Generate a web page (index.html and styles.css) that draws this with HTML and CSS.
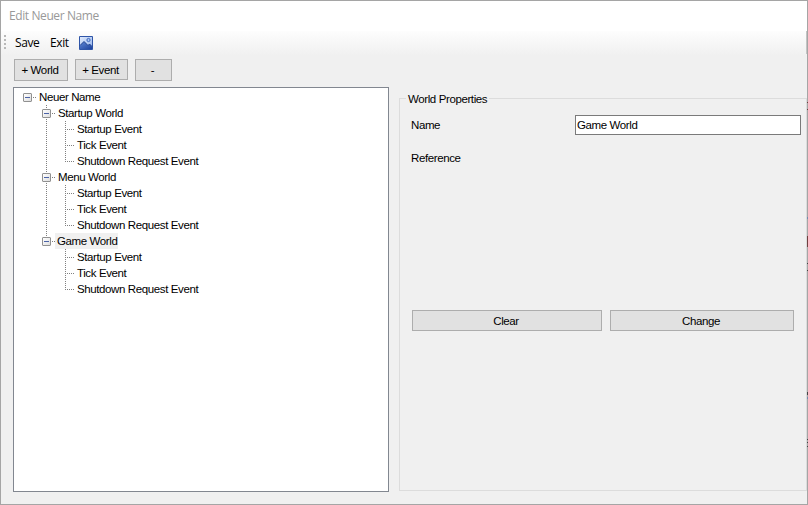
FILE: index.html
```html
<!DOCTYPE html>
<html lang="en">
<head>
<meta charset="utf-8">
<title>Edit Neuer Name</title>
<link rel="stylesheet" href="styles.css">
</head>
<body>
<div class="window">
  <header class="titlebar">Edit Neuer Name</header>
  <nav class="toolbar">
    <i class="grip"></i>
    <span class="save">Save</span>
    <span class="exit">Exit</span>
    <svg class="picture" width="14" height="14" viewBox="0 0 14 14">
      <defs>
        <linearGradient id="sky" x2="1" y2="1"><stop stop-color="#e3ecfc"/><stop offset="1" stop-color="#8fb0ec"/></linearGradient>
        <linearGradient id="hill" x2="1" y2="1"><stop stop-color="#5f87d6"/><stop offset="1" stop-color="#1c429c"/></linearGradient>
      </defs>
      <path d="M.5.5h13v13H.5z" fill="url(#sky)" stroke="#2f55a8"/>
      <path d="M1 9.500L5 5.500l4 4 1.500-1.500L13 10.500V13H1z" fill="url(#hill)"/>
      <path d="M1 9.500L5 5.500l4 4 1.500-1.500L13 10.500" fill="none" stroke="#1d3f8c"/>
      <circle cx="9.500" cy="4" r="1.600" fill="#a9c5f5" stroke="#3f68bd"/>
    </svg>
  </nav>
  <div class="actions">
    <button class="btn world">+ World</button>
    <button class="btn event">+ Event</button>
    <button class="btn minus">-</button>
  </div>
  <main class="content">
    <div class="tree">
      <div class="row"><i class="cell box"></i><span>Neuer Name</span></div>
      <div class="row"><i class="cell"></i><i class="cell line box"></i><span>Startup World</span></div>
      <div class="row"><i class="cell"></i><i class="cell line"></i><i class="cell line leaf"></i><span>Startup Event</span></div>
      <div class="row"><i class="cell"></i><i class="cell line"></i><i class="cell line leaf"></i><span>Tick Event</span></div>
      <div class="row"><i class="cell"></i><i class="cell line"></i><i class="cell end leaf"></i><span>Shutdown Request Event</span></div>
      <div class="row"><i class="cell"></i><i class="cell line box"></i><span>Menu World</span></div>
      <div class="row"><i class="cell"></i><i class="cell line"></i><i class="cell line leaf"></i><span>Startup Event</span></div>
      <div class="row"><i class="cell"></i><i class="cell line"></i><i class="cell line leaf"></i><span>Tick Event</span></div>
      <div class="row"><i class="cell"></i><i class="cell line"></i><i class="cell end leaf"></i><span>Shutdown Request Event</span></div>
      <div class="row"><i class="cell"></i><i class="cell end box"></i><span class="selected">Game World</span></div>
      <div class="row"><i class="cell"></i><i class="cell"></i><i class="cell line leaf"></i><span>Startup Event</span></div>
      <div class="row"><i class="cell"></i><i class="cell"></i><i class="cell line leaf"></i><span>Tick Event</span></div>
      <div class="row"><i class="cell"></i><i class="cell"></i><i class="cell end leaf"></i><span>Shutdown Request Event</span></div>
    </div>
    <fieldset class="group">
      <legend>World Properties</legend>
      <div class="field"><label for="name">Name</label><input id="name" value="Game World"></div>
      <div class="reference">Reference</div>
      <div class="pair">
        <button class="btn clear">Clear</button>
        <button class="btn change">Change</button>
      </div>
    </fieldset>
  </main>
  <svg class="edge" width="2" height="505" viewBox="0 0 2 505">
    <path d="M0 31h1v23H0z" fill="#c4c4c4"/>
    <path d="M1 102h1v1H1zM1 109h1v1H1zM1 236h1v11H1z" fill="#6e4040"/>
    <path d="M1 217h1v2H1zM1 397h1v2H1z" fill="#7389ad"/>
    <path d="M1 263h1v1H1zM1 270h1v1H1zM1 392h1v3H1zM1 439h1v1H1zM1 442h1v1H1zM1 446h1v1H1z" fill="#444"/>
  </svg>
</div>
</body>
</html>
```
FILE: styles.css
```css
*, *::before, *::after { box-sizing: border-box; }
body {
  margin: 0;
  overflow: hidden;
  font: 11.5px/16px "Liberation Sans", Arial, sans-serif;
  letter-spacing: -0.39px;
  color: #000;
}
.window {
  position: relative;
  width: 808px;
  height: 505px;
  border: 1px solid #a5a5a5;
  background: #f0f0f0;
  display: flex;
  flex-direction: column;
}
.edge {
  position: absolute;
  right: -1px;
  top: -1px;
}
.titlebar {
  height: 30px;
  padding-left: 8px;
  background: #fff;
  color: #999;
  font: 12px/30px "Open Sans", sans-serif;
  letter-spacing: -0.4px;
}
.toolbar {
  height: 25px;
  display: flex;
  background: linear-gradient(#fdfdfd, #f0f0f0);
  font: 12px/24px "Open Sans", sans-serif;
  letter-spacing: -0.4px;
}
.grip {
  width: 2px;
  height: 14px;
  margin: 4px 9px 0 3px;
  background: repeating-linear-gradient(#b8b8b8 0 2px, transparent 2px 4px);
}
.save { width: 35px; }
.exit { width: 29px; }
.picture { margin-top: 5px; }
.actions {
  height: 31px;
  padding: 3px 0 0 13px;
  display: flex;
  align-items: flex-start;
}
.btn {
  height: 22px;
  padding: 0 2px 0 0;
  border: 1px solid #adadad;
  border-radius: 0;
  background: #e1e1e1;
  color: #000;
  font: inherit;
  letter-spacing: inherit;
  line-height: 20px;
}
.world { width: 54px; margin-right: 7px; }
.event { width: 53px; height: 21px; margin-right: 7px; }
.minus { width: 37px; }
.content {
  display: flex;
  padding-left: 12px;
}
.tree {
  width: 376px;
  height: 405px;
  border: 1px solid #828790;
  background: #fff;
  padding: 1px 0 0 4px;
}
.row {
  height: 16px;
  display: flex;
  white-space: nowrap;
}
.row span { padding-left: 2px; }
.row .selected {
  margin-left: -1px;
  width: 63px;
  background: #f0f0f0;
}
.cell {
  position: relative;
  width: 19px;
  height: 16px;
}
.line, .end {
  background: repeating-linear-gradient(#808080 0 1px, transparent 1px 2px) 9px 0 / 1px 16px no-repeat;
}
.end { background-size: 1px 9px; }
.leaf::after, .box::after {
  content: "";
  position: absolute;
  left: 9px;
  top: 8px;
  width: 9px;
  height: 1px;
  background: repeating-linear-gradient(90deg, #808080 0 1px, transparent 1px 2px);
}
.box::after { left: 15px; width: 3px; }
.box::before {
  content: "";
  position: absolute;
  left: 5px;
  top: 4px;
  width: 9px;
  height: 9px;
  border: 1px solid #919191;
  border-radius: 1px;
  background:
    linear-gradient(#4b63a7, #4b63a7) center / 5px 1px no-repeat,
    linear-gradient(135deg, #fff, #dedede);
}
.group {
  width: 408px;
  min-width: 0;
  height: 399px;
  margin: 5px 0 0 10px;
  padding: 0 0 0 11px;
  border: 1px solid #dcdcdc;
}
legend {
  height: 13px;
  margin-left: -5px;
  padding: 0 2px;
  line-height: 15px;
}
.field {
  display: flex;
  height: 20px;
  margin-top: 10px;
  line-height: 20px;
}
.field label { width: 164px; }
.field input {
  width: 226px;
  height: 20px;
  padding: 0 1px;
  border: 1px solid #7a7a7a;
  background: #fff;
  color: #000;
  font: inherit;
  letter-spacing: inherit;
}
.reference { margin-top: 15px; height: 16px; }
.pair {
  display: flex;
  gap: 8px;
  margin: 144px 0 0 1px;
}
.pair .btn { height: 21px; }
.clear { width: 190px; }
.change { width: 184px; }
```
